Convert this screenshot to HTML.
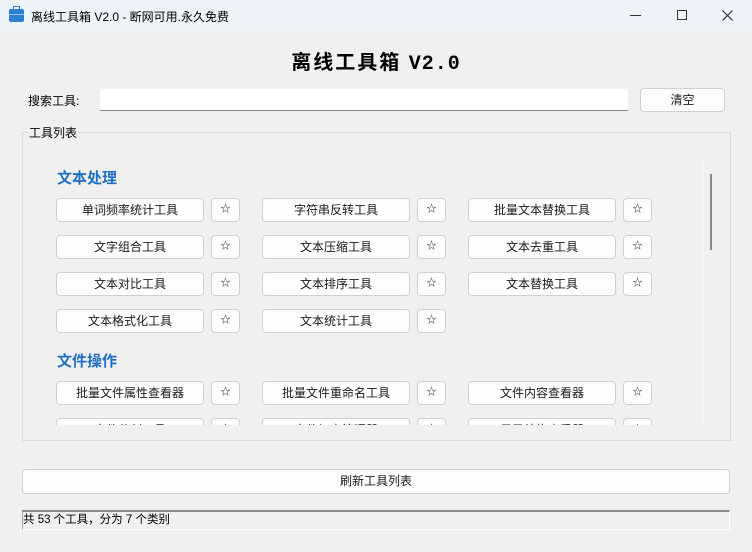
<!DOCTYPE html>
<html><head><meta charset="utf-8"><style>
*{box-sizing:border-box;margin:0;padding:0}
body{width:752px;height:552px;background:#f0f0f0;position:relative;overflow:hidden;font-family:"Liberation Sans","Noto Sans CJK SC",sans-serif;font-size:12px;color:#000}
.a{position:absolute}
.tb{left:0;top:0;width:752px;height:31px;background:#eef3f9}
.btn{position:absolute;height:24px;background:#fdfdfd;border:1px solid #d0d0d0;border-radius:4px;text-align:center;line-height:22px;font-size:12px;color:#1a1a1a}
.s{font-size:10px}
.cat{position:absolute;color:#1f6fc5;font-weight:bold;font-size:15px}
</style></head><body>
<div class="a tb"></div>
<div class="a" style="left:9px;top:9px;width:15px;height:13px;background:#2d7fd3;border-radius:2px"></div>
<div class="a" style="left:13px;top:6px;width:7px;height:4px;border:1.5px solid #2d7fd3;border-bottom:none"></div>
<div class="a" style="left:9px;top:14px;width:15px;height:1px;background:#9cc8f0"></div>
<div class="a" style="left:31px;top:8px;font-size:12px">离线工具箱 V2.0 - 断网可用.永久免费</div>
<div class="a" style="left:630px;top:15px;width:11px;height:1px;background:#333"></div>
<div class="a" style="left:677px;top:10px;width:10px;height:10px;border:1px solid #333"></div>
<svg class="a" style="left:722px;top:10px" width="11" height="11"><path d="M0.5 0.5L10.5 10.5M10.5 0.5L0.5 10.5" stroke="#333" stroke-width="1.2"/></svg>
<div class="a" style="left:0;top:53px;width:752px;text-align:center;font-size:20px;font-weight:bold;line-height:1;letter-spacing:2px">离线工具箱 <span style="font-family:'Liberation Mono',monospace;letter-spacing:1px">V2.0</span></div>
<div class="a" style="left:28px;top:92px">搜索工具:</div>
<div class="a" style="left:100px;top:89px;width:528px;height:22px;background:#fff;border-bottom:1px solid #888"></div>
<div class="btn" style="left:640px;top:88px;width:85px;height:24px">清空</div>
<div class="a" style="left:22px;top:132px;width:709px;height:309px;border:1px solid #d8d8d8"></div>
<div class="a" style="left:28px;top:124px;background:#f0f0f0;padding:0 1px">工具列表</div>
<div class="a" style="left:702px;top:157px;width:1px;height:268px;background:#fbfbfb"></div>
<div class="a" style="left:710px;top:174px;width:2px;height:76px;background:#8a8a8a"></div>
<div class="a" style="left:23px;top:150px;width:679px;height:275px;overflow:hidden">
<div class="cat" style="left:34px;top:17px">文本处理</div>
<div class="btn" style="left:33px;top:48px;width:148px">单词频率统计工具</div><div class="btn s" style="left:188px;top:48px;width:29px">☆</div>
<div class="btn" style="left:239px;top:48px;width:148px">字符串反转工具</div><div class="btn s" style="left:394px;top:48px;width:29px">☆</div>
<div class="btn" style="left:445px;top:48px;width:148px">批量文本替换工具</div><div class="btn s" style="left:600px;top:48px;width:29px">☆</div>
<div class="btn" style="left:33px;top:85px;width:148px">文字组合工具</div><div class="btn s" style="left:188px;top:85px;width:29px">☆</div>
<div class="btn" style="left:239px;top:85px;width:148px">文本压缩工具</div><div class="btn s" style="left:394px;top:85px;width:29px">☆</div>
<div class="btn" style="left:445px;top:85px;width:148px">文本去重工具</div><div class="btn s" style="left:600px;top:85px;width:29px">☆</div>
<div class="btn" style="left:33px;top:122px;width:148px">文本对比工具</div><div class="btn s" style="left:188px;top:122px;width:29px">☆</div>
<div class="btn" style="left:239px;top:122px;width:148px">文本排序工具</div><div class="btn s" style="left:394px;top:122px;width:29px">☆</div>
<div class="btn" style="left:445px;top:122px;width:148px">文本替换工具</div><div class="btn s" style="left:600px;top:122px;width:29px">☆</div>
<div class="btn" style="left:33px;top:159px;width:148px">文本格式化工具</div><div class="btn s" style="left:188px;top:159px;width:29px">☆</div>
<div class="btn" style="left:239px;top:159px;width:148px">文本统计工具</div><div class="btn s" style="left:394px;top:159px;width:29px">☆</div>
<div class="cat" style="left:34px;top:200px">文件操作</div>
<div class="btn" style="left:33px;top:231px;width:148px">批量文件属性查看器</div><div class="btn s" style="left:188px;top:231px;width:29px">☆</div>
<div class="btn" style="left:239px;top:231px;width:148px">批量文件重命名工具</div><div class="btn s" style="left:394px;top:231px;width:29px">☆</div>
<div class="btn" style="left:445px;top:231px;width:148px">文件内容查看器</div><div class="btn s" style="left:600px;top:231px;width:29px">☆</div>
<div class="btn" style="left:33px;top:268px;width:148px">文件分割工具</div><div class="btn s" style="left:188px;top:268px;width:29px">☆</div>
<div class="btn" style="left:239px;top:268px;width:148px">文件加密管理器</div><div class="btn s" style="left:394px;top:268px;width:29px">☆</div>
<div class="btn" style="left:445px;top:268px;width:148px">目录结构查看器</div><div class="btn s" style="left:600px;top:268px;width:29px">☆</div>
</div>
<div class="btn" style="left:22px;top:469px;width:708px;height:25px">刷新工具列表</div>
<div class="a" style="left:22px;top:510px;width:708px;height:20px;border-top:2px solid #8a8a8a;border-left:1px solid #a0a0a0;border-bottom:1px solid #fff;border-right:1px solid #fff;line-height:17px;font-size:11.5px">共 53 个工具，分为 7 个类别</div>
</body></html>
